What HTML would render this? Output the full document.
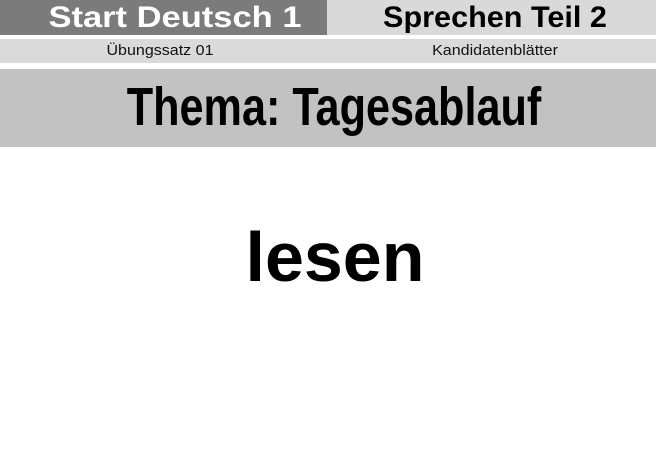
<!DOCTYPE html>
<html><head><meta charset="utf-8"><style>
html,body{margin:0;padding:0;background:#fff;width:656px;height:460px;overflow:hidden;font-family:"Liberation Sans",Arial,sans-serif}
.a{position:absolute}
.t{position:absolute;white-space:nowrap;transform-origin:center;text-align:center}
</style></head><body>
<div class="a" style="left:0;top:0;width:327px;height:35px;background:#7b7b7b"></div>
<div class="a" style="left:327px;top:0;width:329px;height:35px;background:#d9d9d9"></div>
<div class="a" style="left:0;top:39px;width:656px;height:24px;background:#dadada"></div>
<div class="a" style="left:0;top:69px;width:656px;height:78px;background:#c2c2c2"></div>

<div class="t" style="left:0;width:350px;top:1px;font-size:30px;font-weight:bold;color:#fff;line-height:34px;transform:scaleX(1.15)">Start Deutsch 1</div>
<div class="t" style="left:340px;width:310px;top:1px;font-size:30px;font-weight:bold;color:#000;line-height:34px;transform:scaleX(1.02)">Sprechen Teil 2</div>
<div class="t" style="left:60px;width:200px;top:40px;font-size:15px;color:#111;line-height:22px;transform:scaleX(1.07)">Übungssatz 01</div>
<div class="t" style="left:395px;width:200px;top:40px;font-size:15px;color:#111;line-height:22px;transform:scaleX(1.07)">Kandidatenblätter</div>
<div class="t" style="left:34px;width:600px;top:76px;font-size:54px;font-weight:bold;color:#000;line-height:62px;transform:scaleX(0.8)">Thema: Tagesablauf</div>
<div class="t" style="left:185px;width:300px;top:215px;font-size:70px;font-weight:bold;color:#000;line-height:84px">lesen</div>
</body></html>
